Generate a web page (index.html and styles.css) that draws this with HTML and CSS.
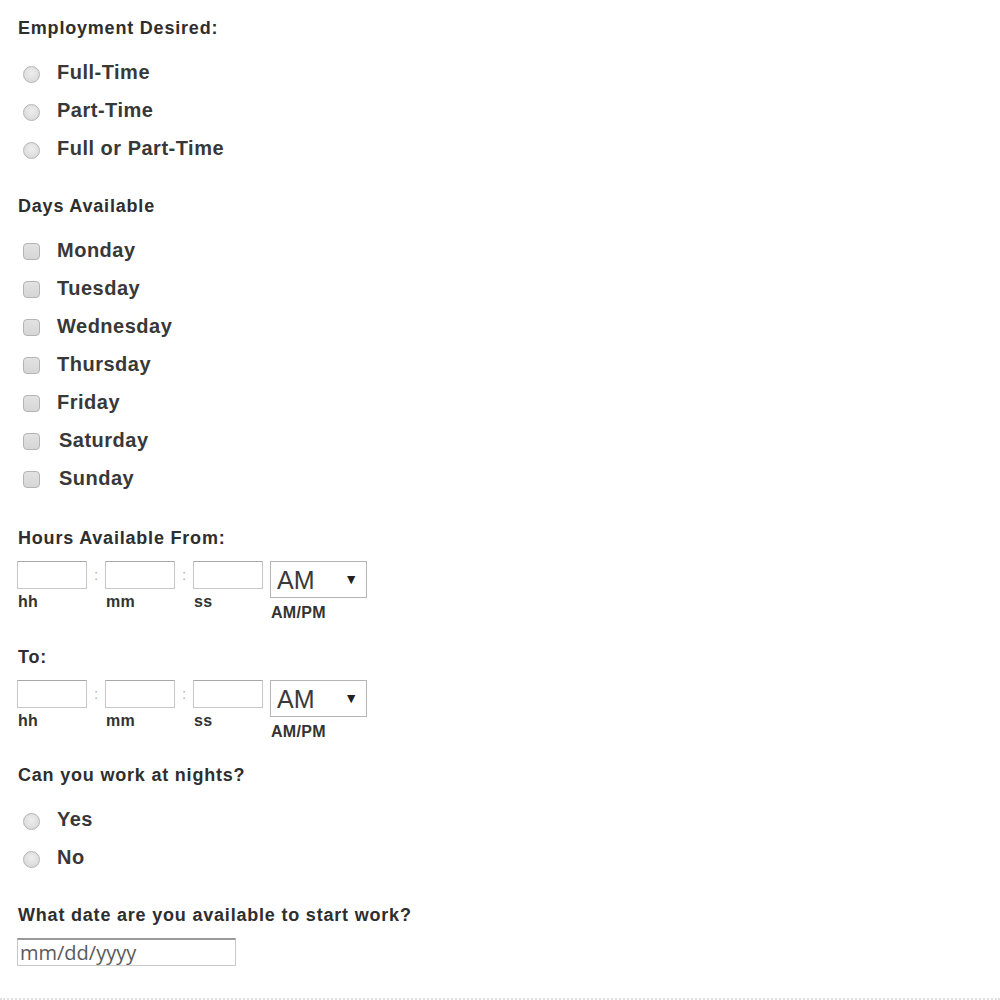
FILE: index.html
```html
<!DOCTYPE html>
<html lang="en">
<head>
<meta charset="utf-8">
<title>Availability</title>
<link rel="stylesheet" href="styles.css">
</head>
<body>
<form class="form">
  <div class="field-label">Employment Desired:</div>
  <div class="options">
    <label class="option"><input type="radio" name="emp" class="radio"><span class="option-text">Full-Time</span></label>
    <label class="option"><input type="radio" name="emp" class="radio"><span class="option-text">Part-Time</span></label>
    <label class="option"><input type="radio" name="emp" class="radio"><span class="option-text">Full or Part-Time</span></label>
  </div>

  <div class="field-label section">Days Available</div>
  <div class="options days">
    <label class="option"><input type="checkbox" class="check"><span class="option-text">Monday</span></label>
    <label class="option"><input type="checkbox" class="check"><span class="option-text">Tuesday</span></label>
    <label class="option"><input type="checkbox" class="check"><span class="option-text">Wednesday</span></label>
    <label class="option"><input type="checkbox" class="check"><span class="option-text">Thursday</span></label>
    <label class="option"><input type="checkbox" class="check"><span class="option-text">Friday</span></label>
    <label class="option"><input type="checkbox" class="check"><span class="option-text shifted">Saturday</span></label>
    <label class="option"><input type="checkbox" class="check"><span class="option-text shifted">Sunday</span></label>
  </div>

  <div class="field-label section-tight">Hours Available From:</div>
  <div class="time-row">
    <div class="time-part"><input type="text" class="time-box"><span class="sub-label">hh</span></div>
    <span class="colon">:</span>
    <div class="time-part"><input type="text" class="time-box"><span class="sub-label">mm</span></div>
    <span class="colon">:</span>
    <div class="time-part"><input type="text" class="time-box"><span class="sub-label">ss</span></div>
    <div class="time-part ampm">
      <div class="select-wrap"><select class="select"><option>AM</option><option>PM</option></select><span class="arrow">&#9660;</span></div>
      <span class="sub-label">AM/PM</span>
    </div>
  </div>

  <div class="field-label after-time">To:</div>
  <div class="time-row">
    <div class="time-part"><input type="text" class="time-box"><span class="sub-label">hh</span></div>
    <span class="colon">:</span>
    <div class="time-part"><input type="text" class="time-box"><span class="sub-label">mm</span></div>
    <span class="colon">:</span>
    <div class="time-part"><input type="text" class="time-box"><span class="sub-label">ss</span></div>
    <div class="time-part ampm">
      <div class="select-wrap"><select class="select"><option>AM</option><option>PM</option></select><span class="arrow">&#9660;</span></div>
      <span class="sub-label">AM/PM</span>
    </div>
  </div>

  <div class="field-label after-time nights">Can you work at nights?</div>
  <div class="options">
    <label class="option"><input type="radio" name="night" class="radio"><span class="option-text">Yes</span></label>
    <label class="option"><input type="radio" name="night" class="radio"><span class="option-text">No</span></label>
  </div>

  <div class="field-label section date-label">What date are you available to start work?</div>
  <input type="text" class="date-box" placeholder="mm/dd/yyyy">
</form>
<div class="rule"></div>
</body>
</html>
```

FILE: styles.css
```css
html, body {
  margin: 0;
  padding: 0;
  background: #ffffff;
}

body {
  font-family: "Liberation Sans", Arial, sans-serif;
  color: #333333;
}

.form {
  padding: 17px 0 0 17px;
}

.field-label {
  font-size: 18px;
  font-weight: bold;
  line-height: 22px;
  letter-spacing: 0.8px;
  color: #2e2e2e;
  padding-left: 1px;
  margin-bottom: 14px;
}

.field-label.section {
  margin-top: 28px;
}

.field-label.section-tight {
  margin-top: 30px;
  margin-bottom: 12px;
}

.field-label.after-time {
  margin-top: 25px;
  margin-bottom: 12px;
}

.field-label.nights {
  margin-top: 24px;
  margin-bottom: 14px;
}

.field-label.date-label {
  margin-bottom: 12px;
}

.options {
  display: flex;
  flex-direction: column;
}

.options.days {
  margin-top: 2px;
}

.option {
  display: flex;
  align-items: center;
  height: 38px;
}

.radio,
.check {
  appearance: none;
  -webkit-appearance: none;
  width: 17px;
  height: 17px;
  margin: 0 0 0 6px;
  box-sizing: border-box;
  border: 1px solid #b4b4b4;
  flex: none;
}

.radio {
  border-radius: 50%;
  background: radial-gradient(circle at 50% 40%, #eeeeee 0%, #dcdcdc 70%, #cfcfcf 100%);
  margin-top: 4px;
}

.check {
  border-radius: 4px;
  background: linear-gradient(#e2e2e2, #d6d6d6);
  margin-top: 2px;
}

.option-text {
  font-size: 20px;
  font-weight: bold;
  letter-spacing: 0.5px;
  color: #383838;
  margin-left: 17px;
}

.option-text.shifted {
  margin-left: 19px;
}

.time-row {
  display: flex;
  align-items: flex-start;
}

.time-part {
  display: flex;
  flex-direction: column;
}

.time-box {
  width: 70px;
  height: 28px;
  box-sizing: border-box;
  margin: 0;
  border: 1px solid #c8c8c8;
  border-top-color: #a8a8a8;
  background: #fff;
}

.colon {
  width: 18px;
  height: 28px;
  line-height: 28px;
  text-align: center;
  font-size: 15px;
  color: #b0b0b0;
}

.sub-label {
  font-size: 16px;
  font-weight: bold;
  line-height: 16px;
  letter-spacing: 0.3px;
  color: #333;
  margin-top: 5px;
  padding-left: 1px;
}

.ampm {
  margin-left: 7px;
}

.select-wrap {
  position: relative;
  width: 97px;
  height: 37px;
}

.select {
  appearance: none;
  -webkit-appearance: none;
  width: 97px;
  height: 37px;
  box-sizing: border-box;
  margin: 0;
  border: 1px solid #b5b5b5;
  border-radius: 0;
  background: #fff;
  font-family: "Liberation Sans", Arial, sans-serif;
  font-size: 25px;
  color: #3a3a3a;
  padding: 0 0 0 6px;
}

.arrow {
  position: absolute;
  right: 9px;
  top: 10px;
  font-size: 14px;
  line-height: 16px;
  color: #222;
  pointer-events: none;
}

.ampm .sub-label {
  margin-top: 7px;
}

.date-box {
  display: block;
  width: 219px;
  height: 28px;
  box-sizing: border-box;
  margin: 0;
  border: 1px solid #c8c8c8;
  border-top: 2px solid #9a9a9a;
  padding: 0 0 0 2px;
  font-family: "Open Sans", "Noto Sans", sans-serif;
  font-size: 20px;
  color: #555;
}

.date-box::placeholder {
  color: #5a5a5a;
}

.rule {
  margin-top: 32px;
  border-top: 2px dotted #e0e0e0;
}
```
